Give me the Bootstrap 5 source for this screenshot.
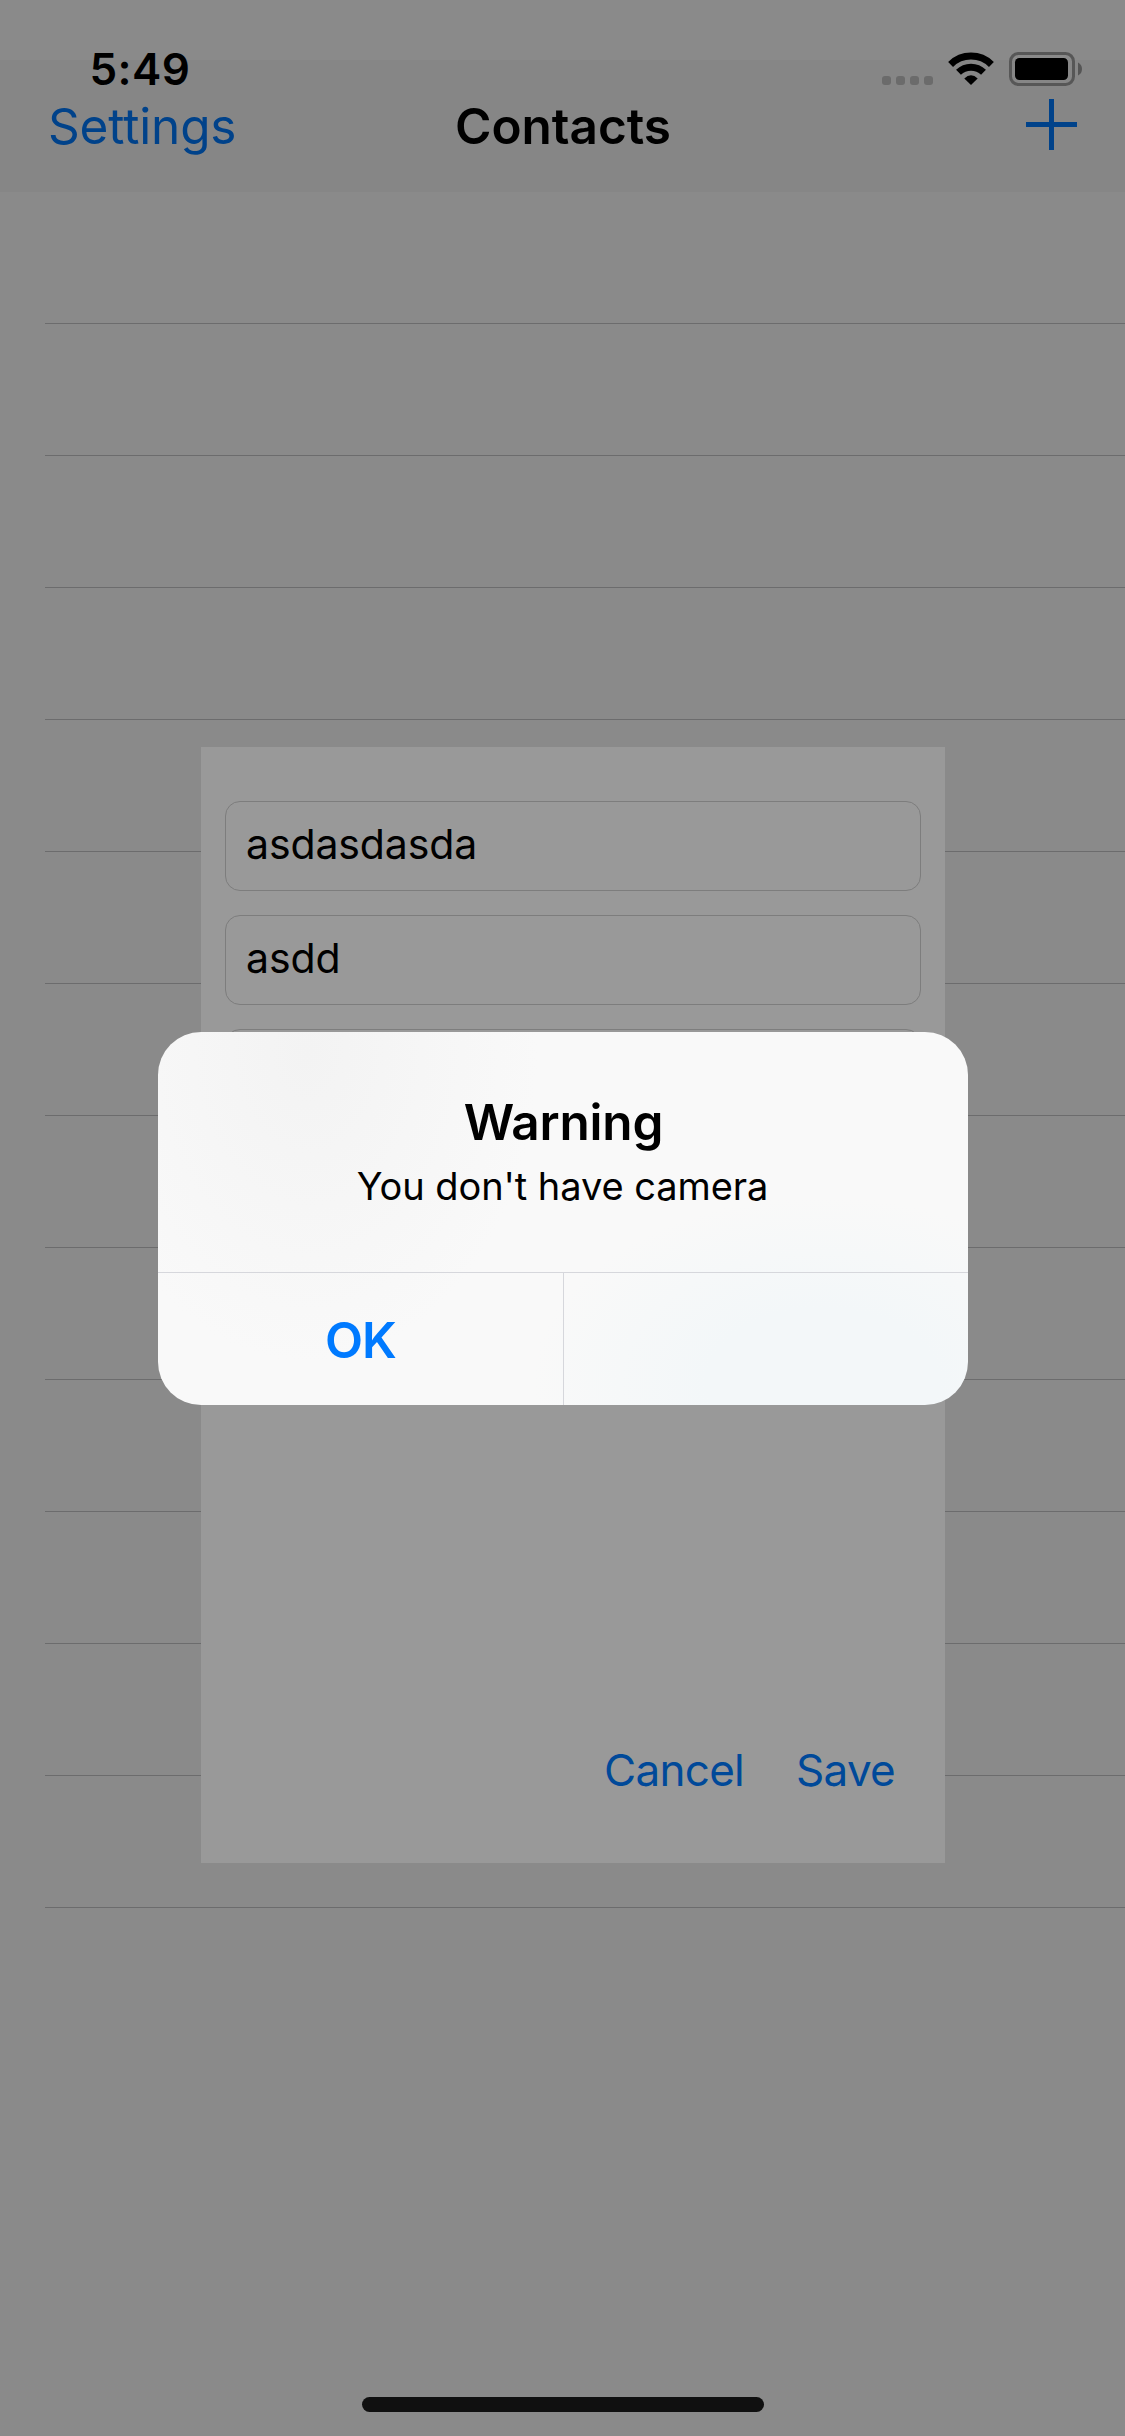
<!DOCTYPE html>
<html lang="en">
<head>
<meta charset="utf-8">
<meta name="viewport" content="width=device-width, initial-scale=1">
<title>Contacts</title>
<link href="https://cdn.jsdelivr.net/npm/bootstrap@5.3.0/dist/css/bootstrap.min.css" rel="stylesheet">
<style>
  body { font-family: Inter, "Liberation Sans", sans-serif; background: #8a8a8a; color: #000; }
  .screen { width: 1125px; height: 2436px; background: #8a8a8a; }
  .app-header { height: 192px; background: linear-gradient(#8a8a8a 60px, #868686 60px); }
  .status-row { height: 96px; padding: 39px 41px 0 89.5px; }
  .clock { font-size: 44px; line-height: 60px; letter-spacing: .4px; }
  .status-icons { margin-top: 11px; }
  .nav-line { height: 60px; padding: 0 47px 0 48px; }
  .nav-side { width: 250px; }
  .nav-plus { padding-bottom: 6px; }
  .nav-text { font-size: 49.5px; line-height: 60px; }
  .link-dim { color: #00428a; letter-spacing: -.15px; }
  .rows { padding-left: 45px; }
  .contact-row { height: 132px; border-bottom: 1px solid #6c6c6d; }
  .overlay-form { padding-top: 747px; padding-left: 201px; }
  .form-panel { width: 744px; height: 1116px; background: #999; padding: 54px 24px 63px; }
  .entry { height: 90px; border: 1px solid #7d7d7d; border-radius: 15px; margin-bottom: 24px; padding: 0 20px 2px; background: #999; color: #000; font-size: 41px; letter-spacing: -.13px; }
  .form-actions { gap: 52px; padding-right: 26px; }
  .action { color: #004999; font-size: 44px; line-height: 60px; letter-spacing: -.72px; }
  .overlay-alert { padding-top: 1032px; }
  .alert-box { width: 810px; height: 373px; border-radius: 43px; overflow: hidden;
    background:
      radial-gradient(ellipse 290px 185px at 665px 350px, #f3f7f9 40%, #f3f7f900 100%),
      radial-gradient(ellipse 230px 310px at 150px 20px, #f3f3f3, #f3f3f300 100%),
      #f9f9f9; }
  .alert-text { height: 241px; padding-top: 60px; border-bottom: 1px solid #d6d7dc; }
  .alert-heading-text { font-size: 49.5px; line-height: 60px; letter-spacing: -.2px; padding-left: 2px; }
  .alert-message { font-size: 38px; line-height: 48px; letter-spacing: -.07px; margin-top: 10px; }
  .alert-ok { width: 406px; color: #007aff; font-size: 49.5px; line-height: 60px; letter-spacing: -.9px; border-right: 1px solid #d6d7dc; padding-top: 2px; padding-left: 1px; }
  .home-bar { width: 402px; height: 15px; border-radius: 8px; background: #101010; margin-bottom: 24px; }
</style>
</head>
<body>
<main class="screen position-relative overflow-hidden d-flex flex-column">
  <header class="app-header">
    <div class="status-row d-flex justify-content-between align-items-start">
      <div class="clock fw-semibold">5:49</div>
      <svg class="status-icons" width="204" height="38" viewBox="880 50 204 38" aria-hidden="true">
        <g fill="#6b6b6b">
          <rect x="882" y="76" width="9" height="9" rx="3"/><rect x="896" y="76" width="9" height="9" rx="3"/>
          <rect x="910" y="76" width="9" height="9" rx="3"/><rect x="924" y="76" width="9" height="9" rx="3"/>
        </g>
        <g fill="none" stroke="#000" stroke-width="7">
          <path d="M950.6 64.4A29.1 29.1 0 0 1 991.4 64.4"/>
          <path d="M958.5 72.3A18 18 0 0 1 983.5 72.3"/>
        </g>
        <path d="M971 85L964.3 78.4Q971 72 977.7 78.4Z"/>
        <rect x="1010.5" y="53.5" width="63" height="31" rx="8" fill="none" stroke="#575757" stroke-width="3"/>
        <rect x="1015" y="58" width="53" height="22" rx="4.5"/>
        <path d="M1078 62.5Q1082 64.5 1082 69T1078 75.5Z" fill="#555"/>
      </svg>
    </div>
    <nav class="nav-line d-flex justify-content-between align-items-center">
      <a class="nav-side nav-text link-dim text-decoration-none" href="#">Settings</a>
      <h1 class="nav-text fw-semibold m-0">Contacts</h1>
      <a class="nav-side nav-plus d-flex justify-content-end" href="#" aria-label="Add">
        <svg width="52" height="54" viewBox="0 0 52 54"><path d="M0 28.5H51M25.5 3V54" stroke="#00428a" stroke-width="5"/></svg>
      </a>
    </nav>
  </header>

  <section class="rows">
    <div class="contact-row"></div><div class="contact-row"></div><div class="contact-row"></div>
    <div class="contact-row"></div><div class="contact-row"></div><div class="contact-row"></div>
    <div class="contact-row"></div><div class="contact-row"></div><div class="contact-row"></div>
    <div class="contact-row"></div><div class="contact-row"></div><div class="contact-row"></div>
    <div class="contact-row"></div>
  </section>

  <footer class="mt-auto d-flex justify-content-center"><div class="home-bar"></div></footer>

  <div class="overlay-form position-absolute top-0 start-0">
    <form class="form-panel d-flex flex-column">
      <div class="entry d-flex align-items-center">asdasdasda</div>
      <div class="entry d-flex align-items-center">asdd</div>
      <div class="entry d-flex align-items-center"></div>
      <div class="form-actions d-flex justify-content-end mt-auto">
        <a class="action text-decoration-none" href="#">Cancel</a>
        <a class="action text-decoration-none" href="#">Save</a>
      </div>
    </form>
  </div>

  <div class="overlay-alert position-absolute top-0 start-0 w-100 d-flex justify-content-center">
    <div class="alert-box d-flex flex-column text-center" role="alertdialog">
      <div class="alert-text">
        <h2 class="alert-heading-text fw-semibold mb-0">Warning</h2>
        <p class="alert-message mb-0">You don't have camera</p>
      </div>
      <div class="d-flex flex-grow-1">
        <div class="alert-ok fw-semibold d-flex align-items-center justify-content-center">OK</div>
        <div class="flex-grow-1"></div>
      </div>
    </div>
  </div>
</main>
<script src="https://cdn.jsdelivr.net/npm/bootstrap@5.3.0/dist/js/bootstrap.bundle.min.js"></script>
</body>
</html>
